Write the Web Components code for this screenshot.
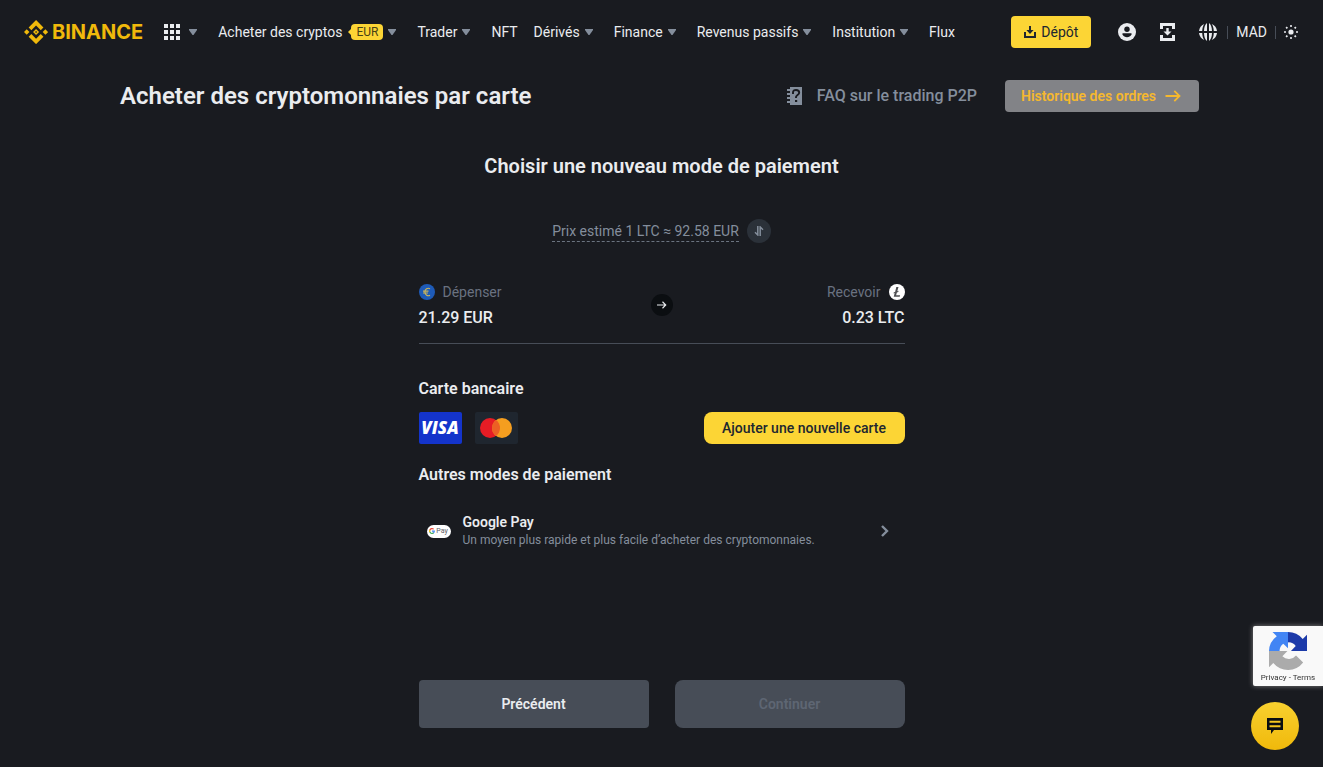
<!DOCTYPE html>
<html lang="fr">
<head>
<meta charset="utf-8">
<title>Acheter des cryptomonnaies par carte</title>
<style>
  html { background: #191b20; }
  body {
    margin: 0;
    min-height: 100vh;
    background: #191b20;
    color: #eaecef;
    font: 400 14px/20px Roboto, "Liberation Sans", sans-serif;
  }
</style>
</head>
<body>
<buy-crypto-app></buy-crypto-app>

<script>
const ICONS = {
  logo: `<svg viewBox="0 0 126 126" fill="#f0b90b"><path fill-rule="evenodd" d="M38.7 53.2 63.3 28.6l24.6 24.6 14.3-14.3L63.3 0 24.4 38.9zM0 63.3 14.3 49l14.3 14.3-14.3 14.3zM38.7 73.4 63.3 98l24.6-24.6 14.3 14.3-38.9 38.9-38.9-38.9zM98 63.3 112.3 49l14.3 14.3-14.3 14.3zM79.300 63.3l-16-16-16 16 16 16zM68.300 63.300l-5 5-5-5 5-5z"/></svg>`,
  grid: `<svg viewBox="0 0 16 16" fill="#eaecef"><path d="M0 0h4v4H0zM6 0h4v4H6zM12 0h4v4h-4zM0 6h4v4H0zM6 6h4v4H6zM12 6h4v4h-4zM0 12h4v4H0zM6 12h4v4H6zM12 12h4v4h-4z"/></svg>`,
  caret: `<svg viewBox="0 0 8 6" fill="#848e9c"><path d="M0 0h8v1L4.5 6h-1L0 1z"/></svg>`,
  deposit: `<svg viewBox="0 0 12 12" fill="#202630"><path d="M5 0h2v4h2.600L6 8 2.400 4H5zM0 6h2v4h8V6h2v6H0z"/></svg>`,
  user: `<svg viewBox="0 0 18 18"><circle cx="9" cy="9" r="9" fill="#eaecef"/><circle cx="9" cy="6.200" r="2.700" fill="#191b20"/><path d="M4.500 10.300h9v1.200c-1 1.800-2.600 2.800-4.500 2.800s-3.500-1-4.500-2.800z" fill="#191b20"/></svg>`,
  orders: `<svg viewBox="0 0 15 18" fill="#eaecef"><path d="M0 0h15v6h-3V3H3v3H0zM0 12h3v3h9v-3h3v6H0zM6.300 5h2.400v3.500h2.800l-4 4-4-4h2.800z"/></svg>`,
  globe: `<svg viewBox="0 0 18 18" fill="#eaecef"><path d="M8 0v8H5C5.100 4 6.200 1.200 8 0zM10 0v8h3C12.900 4 11.800 1.200 10 0zM8 18v-8H5c.1 4 1.200 6.800 3 8zM10 18v-8h3c-.1 4-1.200 6.800-3 8zM5.200.9A9 9 0 0 0 0 8h3.200C3.300 5.200 4 2.700 5.200.9zM12.800.9A9 9 0 0 1 18 8h-3.200c-.1-2.800-.8-5.300-2-7.100zM5.200 17.100A9 9 0 0 1 0 10h3.200c.1 2.800.8 5.300 2 7.100zM12.800 17.100A9 9 0 0 0 18 10h-3.200c-.1 2.800-.8 5.300-2 7.100z"/></svg>`,
  sun: `<svg viewBox="0 0 14 14" fill="#eaecef"><circle cx="7" cy="7" r="2.600"/><path d="M6.200 0h1.600v2H6.200zM6.200 12h1.600v2H6.200zM0 6.200h2v1.600H0zM12 6.200h2v1.600h-2zM1.500 2.700l1.200-1.200 1.300 1.300L2.800 4zM10 11.200l1.200-1.200 1.300 1.300-1.200 1.200zM11.300 1.500l1.200 1.200L11.200 4 10 2.800zM2.800 10 4 11.200l-1.300 1.300-1.200-1.200z"/></svg>`,
  faq: `<svg viewBox="0 0 15 18"><path d="M3 0h12v18H3v-2H0v-2h3v-2H0v-2h3V8H0V6h3V4H0V2h3z" fill="#848e9c"/><path d="M6 7V5.500C6 3.700 7.200 3 9 3s3.200.9 3.200 2.700c0 2.200-3.200 2.300-3.200 4.300v1" fill="none" stroke="#191b20" stroke-width="1.900"/><path d="M8 13h2.200v2H8z" fill="#191b20"/></svg>`,
  arrow: `<svg viewBox="0 0 16 12" fill="none" stroke="currentColor" stroke-width="1.800"><path d="M0 6h14M8.800.8 14 6l-5.200 5.200"/></svg>`,
  swap: `<svg viewBox="0 0 10 10" fill="none" stroke="#848e9c" stroke-width="1.500"><path d="M3.800 0v9L1 6.200M6.200 10V1L9 3.800"/></svg>`,
  euro: `<svg viewBox="0 0 16 16"><circle cx="8" cy="8" r="8" fill="#1e5bb8"/><path d="M11 4.700A3.500 3.700 0 1 0 11 11.300M4 7.200h5.500M4 9h5" fill="none" stroke="#c9b45c" stroke-width="1.200"/></svg>`,
  ltc: `<svg viewBox="0 0 16 16"><circle cx="8" cy="8" r="8" fill="#fff"/><path d="M7.300 3h2.200L8.300 7.200l1.300-.5-.3 1.200-1.400.5-.8 2.800h4l-.4 1.600H4.700l1-3.700-1.200.4.3-1.200 1.300-.4z" fill="#4f5053"/></svg>`,
  mastercard: `<svg viewBox="0 0 32 20"><circle cx="10" cy="10" r="10" fill="#e61c25"/><circle cx="22" cy="10" r="10" fill="#f59e1f"/><path d="M16 2a10 10 0 0 1 0 16 10 10 0 0 1 0-16z" fill="#ec6024"/></svg>`,
  google: `<svg viewBox="0 0 18 18"><path d="M17.600 9.200c0-.6 0-1.200-.2-1.800H9v3.500h4.800a4 4 0 0 1-1.800 2.700v2.300h2.900c1.700-1.600 2.700-4 2.700-6.700z" fill="#4285f4"/><path d="M9 18c2.400 0 4.500-.8 6-2.200l-3-2.200a5.400 5.400 0 0 1-8-2.900H1V13a9 9 0 0 0 8 5z" fill="#34a853"/><path d="M4 10.700a5.400 5.400 0 0 1 0-3.400V5H1a9 9 0 0 0 0 8z" fill="#fbbc05"/><path d="M9 3.600c1.300 0 2.500.5 3.400 1.300L15 2.300A9 9 0 0 0 1 5l3 2.300a5.400 5.400 0 0 1 5-3.700z" fill="#ea4335"/></svg>`,
  chevron: `<svg viewBox="0 0 8 12" fill="none" stroke="#848e9c" stroke-width="2.400"><path d="M1 1l5 5-5 5"/></svg>`,
  recaptcha: `<svg viewBox="0 0 64 64"><path d="M64 32V4.600l-7.200 7.200A32 32 0 0 0 32 0v17.500a15 15 0 0 1 13 6L37 32z" fill="#1c3aa9"/><path d="M32 0H5.900l7.200 7.200A32 32 0 0 0 0 32h17.800a15 15 0 0 1 6.200-12.400l8 7.600z" fill="#4285f4"/><path d="M0 32v27.400l7.200-7.200a32 32 0 0 0 50.300-.9L45.500 39.500a15.500 15.500 0 0 1-23 1.500L31 32z" fill="#ababab"/></svg>`,
  chat: `<svg viewBox="0 0 16 16" fill="#0b0e11"><path d="M0 0h16v12H7l-3 4v-4H0zM2.500 2.800v2h11v-2zM2.500 7.200v2h11v-2z" fill-rule="evenodd"/></svg>`
};

class BnIcon extends HTMLElement {
  connectedCallback() {
    const root = this.attachShadow({ mode: "open" });
    root.innerHTML = `
      <style>
        :host{display:inline-flex;flex:none;width:16px;height:16px}
        svg{display:block;width:100%;height:100%}
      </style>
      ${ICONS[this.getAttribute("name")]}
    `;
    root.querySelector("svg").setAttribute("aria-hidden", "true");
  }
}
customElements.define("bn-icon", BnIcon);

class NavItem extends HTMLElement {
  connectedCallback() {
    this.attachShadow({ mode: "open" }).innerHTML = `
      <style>
        :host{display:flex;align-items:center}
        a{display:flex;align-items:center;color:#eaecef;text-decoration:none;white-space:nowrap}
        .caret{display:flex;justify-content:center;width:18px}
        .caret bn-icon{width:8px;height:6px}
      </style>
      <a href="#"><slot></slot>${this.hasAttribute("menu") ? `<span class="caret"><bn-icon name="caret"></bn-icon></span>` : ""}</a>
    `;
  }
}
customElements.define("nav-item", NavItem);

class BnHeader extends HTMLElement {
  connectedCallback() {
    this.attachShadow({ mode: "open" }).innerHTML = `
      <style>
        :host{display:block}
        header{display:flex;align-items:center;height:64px;padding:0 25px 0 24px}
        .logo{display:flex;align-items:center;gap:4px;color:#f0b90b;font:700 20px/24px Inter,"Open Sans",sans-serif;text-decoration:none}
        .logo bn-icon{width:24px;height:24px}
        .apps{margin:0 16px 0 21px}
        .apps bn-icon{margin-right:4px}
        nav{display:flex;align-items:center;gap:16px}
        .tag{position:relative;margin-left:9px;padding:0 5px;border-radius:4px;background:#fcd535;color:#474215;font-size:12px;line-height:16px}
        .tag::before{content:"";position:absolute;left:-3px;top:5px;border:3px solid transparent;border-left:0;border-right-color:#fcd535}
        .tools{display:flex;align-items:center;margin-left:auto}
        button{display:flex;align-items:center;padding:0;border:0;background:none;color:inherit;font:inherit;cursor:pointer}
        .deposit{justify-content:center;gap:5px;width:80px;height:32px;margin-right:27px;border-radius:4px;background:#fcd535;color:#202630}
        .deposit bn-icon{width:12px;height:12px}
        .user,.globe{width:18px;height:18px}
        .globe{margin-right:2px}
        .orders{width:15px;height:18px;margin:0 24px}
        .sun{width:14px;height:14px}
        .sep{width:1px;height:13px;margin:0 8px;background:#474d57}
      </style>
      <header>
        <a class="logo" href="#"><bn-icon name="logo"></bn-icon>BINANCE</a>
        <nav-item class="apps" menu><bn-icon name="grid"></bn-icon></nav-item>
        <nav>
          <nav-item menu>Acheter des cryptos<span class="tag">EUR</span></nav-item>
          <nav-item menu>Trader</nav-item>
          <nav-item>NFT</nav-item>
          <nav-item menu>Dérivés</nav-item>
          <nav-item menu>Finance</nav-item>
          <nav-item menu>Revenus passifs</nav-item>
          <nav-item menu>Institution</nav-item>
          <nav-item>Flux</nav-item>
        </nav>
        <div class="tools">
          <button class="deposit"><bn-icon name="deposit"></bn-icon>Dépôt</button>
          <button aria-label="Compte"><bn-icon class="user" name="user"></bn-icon></button>
          <button aria-label="Ordres"><bn-icon class="orders" name="orders"></bn-icon></button>
          <button aria-label="Langue"><bn-icon class="globe" name="globe"></bn-icon></button>
          <span class="sep"></span>
          <button>MAD</button>
          <span class="sep"></span>
          <button aria-label="Thème"><bn-icon class="sun" name="sun"></bn-icon></button>
        </div>
      </header>
    `;
  }
}
customElements.define("bn-header", BnHeader);

class PageTitle extends HTMLElement {
  connectedCallback() {
    this.attachShadow({ mode: "open" }).innerHTML = `
      <style>
        :host{display:flex;align-items:center;height:64px;padding:0 124px 0 120px}
        h1{margin:0 auto 0 0;font-size:24px;line-height:32px;font-weight:600}
        a{display:flex;align-items:center;text-decoration:none;font-weight:500}
        .faq{gap:15px;margin-right:28px;color:#848e9c;font-size:16px;line-height:24px}
        .faq bn-icon{width:15px;height:18px}
        .history{box-sizing:border-box;justify-content:space-between;width:194px;height:32px;padding:0 17px 0 16px;border-radius:4px;background:#828387;color:#f5b82e;font-weight:600}
        .history bn-icon{width:17px;height:12px}
      </style>
      <h1><slot></slot></h1>
      <a class="faq" href="#"><bn-icon name="faq"></bn-icon>FAQ sur le trading P2P</a>
      <a class="history" href="#">Historique des ordres<bn-icon name="arrow"></bn-icon></a>
    `;
  }
}
customElements.define("page-title", PageTitle);

class TradeSummary extends HTMLElement {
  connectedCallback() {
    this.attachShadow({ mode: "open" }).innerHTML = `
      <style>
        :host{display:block}
        .price{display:flex;justify-content:center;align-items:center;gap:8px;height:24px;color:#848e9c}
        .price span{border-bottom:1px dashed #6b7480}
        .price button{display:flex;justify-content:center;align-items:center;width:24px;height:24px;padding:0;border:0;border-radius:50%;background:#2b3139}
        .price bn-icon{width:10px;height:10px}
        .amounts{display:grid;grid-template-columns:1fr auto 1fr;align-items:center;margin-top:36px;padding-bottom:12px;border-bottom:1px solid #474d57}
        .label{display:flex;align-items:center;gap:8px;color:#6a7280;line-height:26px}
        .value{font-size:16px;line-height:26px;font-weight:500}
        .receive{text-align:right}
        .receive .label{justify-content:flex-end}
        .dot{display:flex;justify-content:center;align-items:center;width:22px;height:22px;border-radius:50%;background:#0b0e11}
        .dot bn-icon{width:10px;height:8px}
      </style>
      <div class="price"><span>Prix estimé 1 LTC ≈ 92.58 EUR</span><button aria-label="Inverser"><bn-icon name="swap"></bn-icon></button></div>
      <div class="amounts">
        <div>
          <div class="label"><bn-icon name="euro"></bn-icon>Dépenser</div>
          <div class="value">21.29 EUR</div>
        </div>
        <span class="dot"><bn-icon name="arrow"></bn-icon></span>
        <div class="receive">
          <div class="label">Recevoir<bn-icon name="ltc"></bn-icon></div>
          <div class="value">0.23 LTC</div>
        </div>
      </div>
    `;
  }
}
customElements.define("trade-summary", TradeSummary);

class PaymentMethods extends HTMLElement {
  connectedCallback() {
    this.attachShadow({ mode: "open" }).innerHTML = `
      <style>
        :host{display:block}
        h3{margin:0;font-size:16px;line-height:24px;font-weight:600}
        .cards{display:flex;align-items:center;gap:13px;margin:11px 0 19px}
        .card{display:flex;justify-content:center;align-items:center;width:43px;height:32px;border-radius:2px;background:#1f262f}
        .card bn-icon{width:32px;height:20px}
        .visa{background:#1434cb;color:#fff;font:italic 800 17px/32px "Open Sans",sans-serif}
        button{border:0;font:inherit;color:inherit;cursor:pointer}
        .add{min-width:201px;height:32px;margin-left:auto;padding:0 16px;border-radius:8px;background:#fcd535;color:#202630;font-weight:500}
        .method{display:flex;align-items:center;width:100%;margin-top:24px;padding:2px 16px 2px 8px;background:none;text-align:left}
        .gpay{display:flex;justify-content:center;align-items:center;gap:1px;width:24px;height:13px;margin-right:12px;border-radius:7px;background:#fff;color:#5f6368;font-size:7px;line-height:13px}
        .gpay bn-icon{width:6px;height:6px}
        .text{flex:1}
        .name{display:block;line-height:18px;font-weight:600}
        .desc{display:block;color:#848e9c;font-size:12px;line-height:18px}
        .chevron{width:8px;height:12px}
      </style>
      <h3>Carte bancaire</h3>
      <div class="cards">
        <span class="card visa">VISA</span>
        <span class="card"><bn-icon name="mastercard"></bn-icon></span>
        <button class="add">Ajouter une nouvelle carte</button>
      </div>
      <h3>Autres modes de paiement</h3>
      <button class="method">
        <span class="gpay"><bn-icon name="google"></bn-icon>Pay</span>
        <span class="text"><span class="name">Google Pay</span><span class="desc">Un moyen plus rapide et plus facile d’acheter des cryptomonnaies.</span></span>
        <bn-icon class="chevron" name="chevron"></bn-icon>
      </button>
    `;
  }
}
customElements.define("payment-methods", PaymentMethods);

class StepButtons extends HTMLElement {
  connectedCallback() {
    this.attachShadow({ mode: "open" }).innerHTML = `
      <style>
        :host{display:grid;grid-template-columns:1fr 1fr;gap:26px}
        button{height:48px;border:0;border-radius:4px;background:#474d57;color:#eaecef;font:inherit;font-weight:600}
        button:disabled{border-radius:8px;color:#5e6673}
      </style>
      <button>Précédent</button>
      <button disabled>Continuer</button>
    `;
  }
}
customElements.define("step-buttons", StepButtons);

class FloatingWidgets extends HTMLElement {
  connectedCallback() {
    this.attachShadow({ mode: "open" }).innerHTML = `
      <style>
        :host{position:fixed;right:0;bottom:17px;display:flex;flex-direction:column;align-items:flex-end;gap:16px}
        .captcha{display:flex;flex-direction:column;align-items:center;box-sizing:border-box;width:70px;height:60px;padding-top:6px;border-radius:2px 0 0 2px;background:#f9f9f9;box-shadow:0 0 5px #808080;color:#333;font-size:8px;line-height:16px}
        .captcha bn-icon{width:38px;height:38px}
        a{color:inherit;text-decoration:none}
        .chat{display:flex;justify-content:center;align-items:center;width:48px;height:48px;margin-right:24px;padding:0;border:0;border-radius:50%;background:linear-gradient(#f8d12f,#f0b90b)}
      </style>
      <div class="captcha"><bn-icon name="recaptcha"></bn-icon><div><a href="#">Privacy</a> - <a href="#">Terms</a></div></div>
      <button class="chat" aria-label="Chat"><bn-icon name="chat"></bn-icon></button>
    `;
  }
}
customElements.define("floating-widgets", FloatingWidgets);

class BuyCryptoApp extends HTMLElement {
  connectedCallback() {
    this.attachShadow({ mode: "open" }).innerHTML = `
      <style>
        :host{display:block}
        main{max-width:486px;margin:0 auto;padding:24px 0 32px}
        h2{margin:0 0 39px;text-align:center;font-size:20px;line-height:28px;font-weight:600}
        payment-methods{margin-top:33px}
        step-buttons{margin-top:129px}
      </style>
      <bn-header></bn-header>
      <page-title>Acheter des cryptomonnaies par carte</page-title>
      <main>
        <h2>Choisir une nouveau mode de paiement</h2>
        <trade-summary></trade-summary>
        <payment-methods></payment-methods>
        <step-buttons></step-buttons>
      </main>
      <floating-widgets></floating-widgets>
    `;
  }
}
customElements.define("buy-crypto-app", BuyCryptoApp);
</script>
</body>
</html>
